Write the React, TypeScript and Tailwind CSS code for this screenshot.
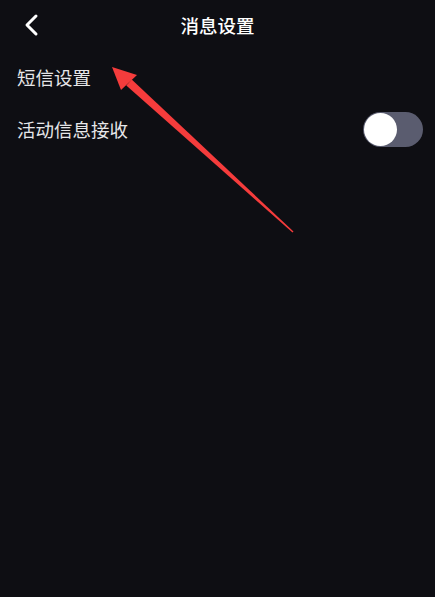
import React from "react";

export default function App() {
  return (
    <div
      className="relative w-[435px] h-[597px] bg-[#0e0e13] overflow-hidden"
      style={{ fontFamily: '"Noto Sans CJK SC", "Noto Sans", sans-serif' }}
    >
      <div className="relative h-[51px] flex items-center justify-center">
        <div className="absolute left-[23px] top-[13px] w-[16px] h-[24px]">
          <svg width="16" height="24" viewBox="0 0 16 24">
            <path d="M13 3 L4 12 L13 21" fill="none" stroke="#ffffff" strokeWidth="3" strokeLinecap="round" strokeLinejoin="round" />
          </svg>
        </div>
        <span className="text-[18.5px] font-medium text-white leading-none">消息设置</span>
      </div>
      <div className="h-[52px] flex items-center px-[17px]">
        <span className="text-[18.5px] text-[#e6e6e8] leading-none">短信设置</span>
      </div>
      <div className="h-[52px] flex items-center justify-between pl-[17px] pr-[12px]">
        <span className="text-[18.5px] text-[#e6e6e8] leading-none">活动信息接收</span>
        <div className="w-[60px] h-[35px] rounded-full bg-[#5a5c6f] flex items-center px-[1px]">
          <div className="w-[33px] h-[33px] rounded-full bg-white" />
        </div>
      </div>
      <svg className="absolute left-0 top-0 pointer-events-none" width="435" height="597" viewBox="0 0 435 597">
        <polygon points="112,67 137,75 121,90" fill="#f53c3c" />
        <polygon points="126.3,85.5 131.7,79.5 293.5,231.5 292.5,232.5" fill="#f53c3c" />
      </svg>
    </div>
  );
}
